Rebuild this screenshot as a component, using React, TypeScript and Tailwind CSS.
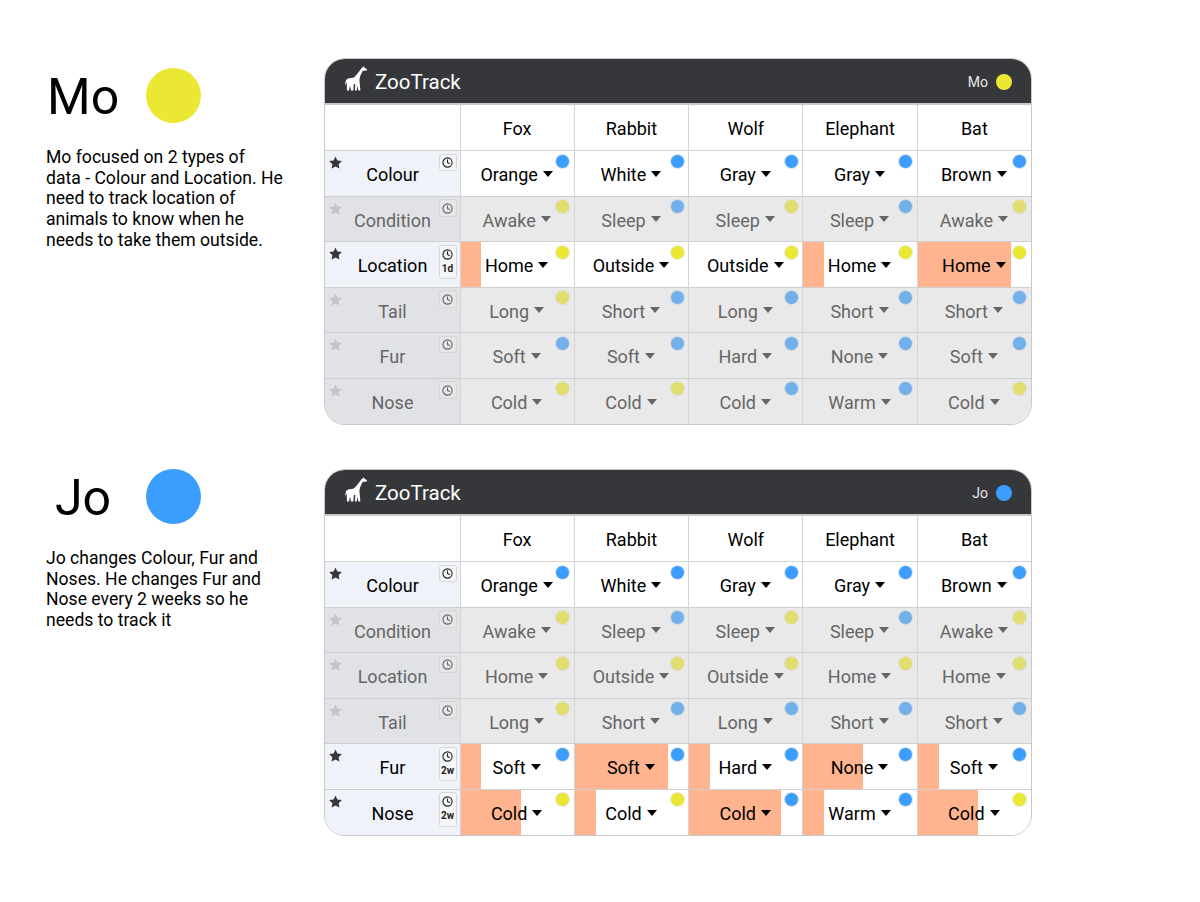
import { Clock } from "lucide-react";

const animals = ["Fox", "Rabbit", "Wolf", "Elephant", "Bat"];
const B = "#3b9eff";
const Y = "#ebe834";

type Row = { label: string; values: string[]; dots: string[] };

const rows: Row[] = [
  { label: "Colour", values: ["Orange", "White", "Gray", "Gray", "Brown"], dots: [B, B, B, B, B] },
  { label: "Condition", values: ["Awake", "Sleep", "Sleep", "Sleep", "Awake"], dots: [Y, B, Y, B, Y] },
  { label: "Location", values: ["Home", "Outside", "Outside", "Home", "Home"], dots: [Y, Y, Y, Y, Y] },
  { label: "Tail", values: ["Long", "Short", "Long", "Short", "Short"], dots: [Y, B, B, B, B] },
  { label: "Fur", values: ["Soft", "Soft", "Hard", "None", "Soft"], dots: [B, B, B, B, B] },
  { label: "Nose", values: ["Cold", "Cold", "Cold", "Warm", "Cold"], dots: [Y, Y, B, B, Y] },
];

type Track = { active: string[]; due: Record<string, string>; bars: Record<string, number[]> };

function Giraffe() {
  return (
    <svg width="22" height="25" viewBox="0 0 22 25" fill="white" className="shrink-0 mb-[4px]">
      <path d="M21.8 3 L19.2 1.6 L18.4 0 L17.6 1.4 L16.4 2.2 L12.6 7.6 L9 11.4 L3 12.4 L1 14 L0 18.5 L0.6 18.5 L1.6 16 L2 24.5 L4 24.5 L5 19.5 L6 24.5 L8.4 24.5 L8.8 18 L10.2 18 L10 24.5 L11.8 24.5 L12.4 19.5 L13.4 24.5 L15.4 24.5 L14.4 14 L15 10.5 L17.6 5 L21.8 4.4 Z" />
    </svg>
  );
}

function Star({ muted }: { muted: boolean }) {
  return (
    <svg width="13" height="13" viewBox="0 0 24 24" fill={muted ? "#c4c5c8" : "#36373b"} className="absolute left-[4px] top-[5px]">
      <path d="M12 0.8l3.5 7.6 8.3 1-6.1 5.7 1.6 8.2L12 19.2l-7.3 4.1 1.6-8.2L.2 9.4l8.3-1z" />
    </svg>
  );
}

function Caret({ muted }: { muted: boolean }) {
  return (
    <svg width="10" height="6" viewBox="0 0 10 6" fill={muted ? "#666" : "#000"} className="ml-[5px] shrink-0">
      <path d="M0 0h10L5 6z" />
    </svg>
  );
}

function Board({ user, color, track }: { user: string; color: string; track: Track }) {
  return (
    <div className="w-[708.5px] h-[367px] shrink-0 rounded-[21px] border-[1.5px] border-[#c9c9c9] overflow-hidden bg-white">
      <div className="h-[46px] bg-[#36373b] flex items-center pl-[20px] pr-[19px] border-b-[2px] border-[#c9c9c9]">
        <Giraffe />
        <span className="ml-[8.5px] pt-[3px] text-[20.5px] text-white">ZooTrack</span>
        <span className="ml-auto pt-[3px] text-[14px] text-[#e8e8e8]">{user}</span>
        <span className="ml-[8px] mt-[2px] w-[16px] h-[16px] rounded-full" style={{ backgroundColor: color }} />
      </div>
      <div className="flex h-[46.75px] border-b-[1.5px] border-[#d4d4d4]">
        <div className="w-[136px] shrink-0 border-r-[1.5px] border-[#d4d4d4]" />
        {animals.map((a, i) => (
          <div key={a} className={`flex-1 flex items-center justify-center pt-[3px] text-[18px] text-black ${i < 4 ? "border-r-[1.5px] border-[#d4d4d4]" : ""}`}>
            {a}
          </div>
        ))}
      </div>
      {rows.map((r, ri) => {
        const on = track.active.includes(r.label);
        const due = track.due[r.label];
        const bars = track.bars[r.label];
        return (
          <div key={r.label} className={`flex h-[45.5px] ${ri < 5 ? "border-b-[1.5px] border-[#cfcfcf]" : ""}`}>
            <div className={`relative w-[136px] shrink-0 border-r-[1.5px] border-[#d4d4d4] flex items-center justify-center pt-[2px] pl-[1px] text-[18px] ${on ? "bg-[#eff2f8] text-black" : "bg-[#e1e2e6] text-[#666]"}`}>
              <Star muted={!on} />
              {r.label}
              <div className={`absolute left-[114px] top-[2.5px] w-[18px] rounded-[3px] border border-[#d6d6d6] flex flex-col items-center ${due ? "h-[34.5px] pt-[3px]" : "h-[17.5px] justify-center"} ${on ? "bg-[#f5f6f8]" : "bg-[#e6e6e8]"}`}>
                <Clock size={11} strokeWidth={2.4} color={on ? "#222" : "#666"} />
                {due && <span className="text-[10px] leading-[12px] mt-[3px] font-bold text-[#222]">{due}</span>}
              </div>
            </div>
            {r.values.map((v, i) => (
              <div key={i} className={`relative flex-1 flex items-center justify-center pr-[1px] text-[18px] overflow-hidden ${on ? "bg-white text-black" : "bg-[#e9e9e9] text-[#666]"} ${i < 4 ? "border-r-[1.5px] border-[#d4d4d4]" : ""}`}>
                {bars && bars[i] > 0 && (
                  <div className="absolute left-0 top-0 bottom-0 bg-[#ffb48f]" style={{ width: bars[i] }} />
                )}
                <span className="relative pt-[2px]">{v}</span>
                <span className="relative"><Caret muted={!on} /></span>
                <span
                  className={`absolute right-[3.5px] top-[2.5px] w-[15px] h-[15px] rounded-full border ${on ? "border-[#e8e8e8]" : "border-[#dedede]"}`}
                  style={{ backgroundColor: on ? r.dots[i] : r.dots[i] === Y ? "#e1de6e" : "#72b0ec" }}
                />
              </div>
            ))}
          </div>
        );
      })}
    </div>
  );
}

function Person({ name, color, top, nameLeft, text, track }: { name: string; color: string; top: string; nameLeft: string; text: string[]; track: Track }) {
  return (
    <div className="flex">
      <div className="w-[323.5px] shrink-0 pl-[46px]">
        <div className={`flex items-center h-[55px] ${top}`}>
          <span className={`w-[100px] pt-[3px] text-[50px] leading-[55px] text-black ${nameLeft}`}>{name}</span>
          <span className="w-[55px] h-[55px] rounded-full" style={{ backgroundColor: color }} />
        </div>
        <div className="mt-[24px] text-[17.6px] leading-[20.7px] text-black">
          {text.map((t) => (
            <div key={t} className="whitespace-nowrap">{t}</div>
          ))}
        </div>
      </div>
      <Board user={name} color={color} track={track} />
    </div>
  );
}

const mo: Track = {
  active: ["Colour", "Location"],
  due: { Location: "1d" },
  bars: { Location: [20, 0, 0, 21, 93] },
};
const jo: Track = {
  active: ["Colour", "Fur", "Nose"],
  due: { Fur: "2w", Nose: "2w" },
  bars: { Fur: [20, 93, 21, 60, 21], Nose: [60, 21, 92, 21, 60] },
};

export default function App() {
  return (
    <div className="w-[1200px] h-[902px] bg-white overflow-hidden pt-[57.5px] flex flex-col gap-[44px] font-['Roboto',sans-serif]">
      <Person
        name="Mo"
        color={Y}
        top="mt-[10.5px]"
        nameLeft="pl-[1px]"
        track={mo}
        text={[
          "Mo focused on 2 types of",
          "data - Colour and Location. He",
          "need to track location of",
          "animals to know when he",
          "needs to take them outside.",
        ]}
      />
      <Person
        name="Jo"
        color={B}
        top="mt-[0.5px]"
        nameLeft="pl-[9px]"
        track={jo}
        text={[
          "Jo changes Colour, Fur and",
          "Noses. He changes Fur and",
          "Nose every 2 weeks so he",
          "needs to track it",
        ]}
      />
    </div>
  );
}
